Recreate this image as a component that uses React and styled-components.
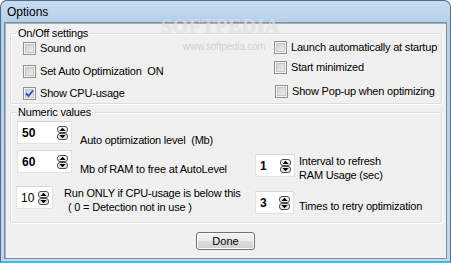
import React from "react";
import styled, { createGlobalStyle } from "styled-components";

const GlobalStyle = createGlobalStyle`
  html, body {
    margin: 0;
    padding: 0;
  }
  body {
    width: 451px;
    height: 263px;
    overflow: hidden;
    background: #ffffff;
    font-family: "Liberation Sans", Arial, sans-serif;
    font-size: 11px;
    letter-spacing: -0.2px;
    color: #000;
  }
`;

// Window frame
const Window = styled.div`
  position: relative;
  width: 451px;
  height: 263px;
  box-sizing: border-box;
  display: flex;
  flex-direction: column;
  background: linear-gradient(#c9ddf1, #b5cfea 22px, #c0d7ee);
  border: 1px solid #4f6e8d;
  border-bottom: 2px solid #3dbbe8;
  border-radius: 7px 7px 0 0;
`;

const TitleBar = styled.div`
  height: 21px;
  line-height: 22px;
  padding-left: 6px;
  font-size: 12px;
  letter-spacing: 0;
  color: #000;
`;

const Client = styled.div`
  flex: 1;
  margin: 0 3px 2px;
  border: 1px solid #7f8e9e;
  box-shadow: inset 1px 1px 0 #a7b1bb;
  background: #f0f0f0;
  display: flex;
  flex-direction: column;
`;

const Watermark = styled.div`
  position: absolute;
  left: 160px;
  top: 14px;
  pointer-events: none;
  display: flex;
  flex-direction: column;
  align-items: center;
`;

const WaterTitle = styled.span`
  font-family: "Liberation Serif", "Times New Roman", serif;
  font-weight: bold;
  font-size: 20px;
  letter-spacing: 0.5px;
  color: rgba(255, 255, 255, 0.55);
  text-shadow: 0 0 1px rgba(120, 120, 120, 0.35);

  sup {
    font-size: 7px;
    vertical-align: top;
  }
`;

const WaterUrl = styled.span`
  margin-top: 3px;
  font-size: 10px;
  color: rgba(200, 200, 200, 0.8);
`;

// Group boxes
const Group = styled.fieldset`
  box-sizing: border-box;
  margin: ${(p) => p.$mt}px 4px 0 5px;
  height: ${(p) => p.$h}px;
  padding: 0;
  border: 1px solid #d5dfe5;
  border-radius: 3px;
  box-shadow: inset 1px 1px 0 #ffffff, 1px 1px 0 #ffffff;
  min-width: 0;
`;

const Legend = styled.legend`
  margin-left: 6px;
  padding: 0 1px;
  line-height: 13px;
`;

const Columns = styled.div`
  display: flex;
  padding-left: ${(p) => p.$pl}px;
`;

const Column = styled.div`
  display: flex;
  flex-direction: column;
  width: ${(p) => (p.$w ? `${p.$w}px` : "auto")};
  padding-top: ${(p) => p.$pt || 0}px;
`;

// Checkbox rows
const CheckRow = styled.label`
  display: flex;
  align-items: center;
  gap: 4px;
  height: 13px;
  margin-top: ${(p) => p.$mt || 0}px;
  margin-left: ${(p) => p.$ml || 0}px;
  line-height: 13px;
  white-space: nowrap;
`;

const Box = styled.span`
  position: relative;
  width: 13px;
  height: 13px;
  box-sizing: border-box;
  border: 1px solid #8e8f8f;
  background: linear-gradient(135deg, #c9c9c9, #f6f6f6);
  box-shadow: inset 0 0 0 1px #f4f4f4, inset 0 0 0 2px #c3c7cc;
  flex-shrink: 0;

  svg {
    position: absolute;
    left: 1px;
    top: 1px;
  }
`;

const Check = ({ checked, label, mt, ml }) => (
  <CheckRow $mt={mt} $ml={ml}>
    <Box>
      {checked && (
        <svg width="9" height="9" viewBox="0 0 9 9">
          <path
            d="M1 4.5 L3.5 7 L8 1.5"
            fill="none"
            stroke="#2a4fae"
            strokeWidth="1.8"
          />
        </svg>
      )}
    </Box>
    <span>{label}</span>
  </CheckRow>
);

// Numeric spin rows
const SpinRow = styled.div`
  display: flex;
  align-items: flex-start;
  gap: ${(p) => p.$gap}px;
  margin-top: ${(p) => p.$mt || 0}px;
  margin-left: ${(p) => p.$ml || 0}px;
`;

const SpinBox = styled.div`
  box-sizing: border-box;
  width: ${(p) => p.$w}px;
  height: 23px;
  flex-shrink: 0;
  display: flex;
  align-items: center;
  justify-content: space-between;
  padding: 0 3px 0 4px;
  background: #ffffff;
  border: 1px solid #dfe3e7;
  border-top-color: #d2d7dc;
  font-size: 12px;
  letter-spacing: 0;
  font-weight: ${(p) => (p.$bold ? "bold" : "normal")};
`;

const SpinLabel = styled.div`
  line-height: ${(p) => p.$lh || 13}px;
  padding-top: ${(p) => p.$pt || 0}px;
  white-space: nowrap;
`;

const Indent = styled.div`
  padding-left: 4px;
  margin-top: 1px;
`;

const Arrows = () => (
  <svg width="11" height="14" viewBox="0 0 11 14">
    <rect x="0.5" y="0.5" width="10" height="6" rx="2.5" fill="#f3f3f3" stroke="#4d4d4d" />
    <rect x="0.5" y="7.5" width="10" height="6" rx="2.5" fill="#e6e6e6" stroke="#4d4d4d" />
    <path d="M2.3 5 H8.7 L5.5 1.8 Z" fill="#000" />
    <path d="M2.3 9 H8.7 L5.5 12.2 Z" fill="#000" />
  </svg>
);

const Spin = ({ value, w, bold }) => (
  <SpinBox $w={w} $bold={bold}>
    <span>{value}</span>
    <Arrows />
  </SpinBox>
);

// Footer
const Footer = styled.div`
  display: flex;
  justify-content: center;
  margin-top: 9px;
`;

const Button = styled.button`
  width: 59px;
  height: 18px;
  padding: 0;
  font-family: inherit;
  font-size: 11px;
  color: #000;
  border: 1px solid #707070;
  border-radius: 3px;
  background: linear-gradient(#f2f2f2 0%, #ebebeb 50%, #dddddd 51%, #cfcfcf 100%);
  box-shadow: inset 0 0 0 1px #fbfbfb;
`;

export default function App() {
  return (
    <>
      <GlobalStyle />
      <Window>
        <TitleBar>Options</TitleBar>
        <Client>
          <Group $mt={4} $h={77}>
            <Legend>On/Off settings</Legend>
            <Columns $pl={12}>
              <Column $w={251} $pt={2}>
                <Check label="Sound on" />
                <Check label={"Set Auto Optimization\u00a0\u00a0ON"} mt={10} />
                <Check label="Show CPU-usage" checked mt={9} />
              </Column>
              <Column $pt={1}>
                <Check label="Launch automatically at startup" />
                <Check label="Start minimized" mt={7} />
                <Check label="Show Pop-up when optimizing" mt={11} ml={1} />
              </Column>
            </Columns>
          </Group>

          <Group $mt={2} $h={117}>
            <Legend>Numeric values</Legend>
            <Columns $pl={6}>
              <Column $w={238} $pt={2}>
                <SpinRow $gap={8}>
                  <Spin value="50" w={55} bold />
                  <SpinLabel $pt={13}>{"Auto optimization level\u00a0\u00a0(Mb)"}</SpinLabel>
                </SpinRow>
                <SpinRow $gap={8} $mt={3}>
                  <Spin value="60" w={55} bold />
                  <SpinLabel $pt={13}>Mb of RAM to free at AutoLevel</SpinLabel>
                </SpinRow>
                <SpinRow $gap={11} $mt={10} $ml={-1}>
                  <Spin value="10" w={37} />
                  <SpinLabel $pt={1}>
                    Run ONLY if CPU-usage is below this
                    <Indent>( 0 = Detection not in use )</Indent>
                  </SpinLabel>
                </SpinRow>
              </Column>
              <Column $pt={35}>
                <SpinRow $gap={4}>
                  <Spin value="1" w={40} bold />
                  <SpinLabel $lh={14} $pt={0}>
                    Interval to refresh
                    <div>RAM Usage (sec)</div>
                  </SpinLabel>
                </SpinRow>
                <SpinRow $gap={5} $mt={9}>
                  <Spin value="3" w={39} bold />
                  <SpinLabel $pt={9}>Times to retry optimization</SpinLabel>
                </SpinRow>
              </Column>
            </Columns>
          </Group>

          <Footer>
            <Button>Done</Button>
          </Footer>
        </Client>
        <Watermark>
          <WaterTitle>
            SOFTPEDIA<sup>™</sup>
          </WaterTitle>
          <WaterUrl>www.softpedia.com</WaterUrl>
        </Watermark>
      </Window>
    </>
  );
}
